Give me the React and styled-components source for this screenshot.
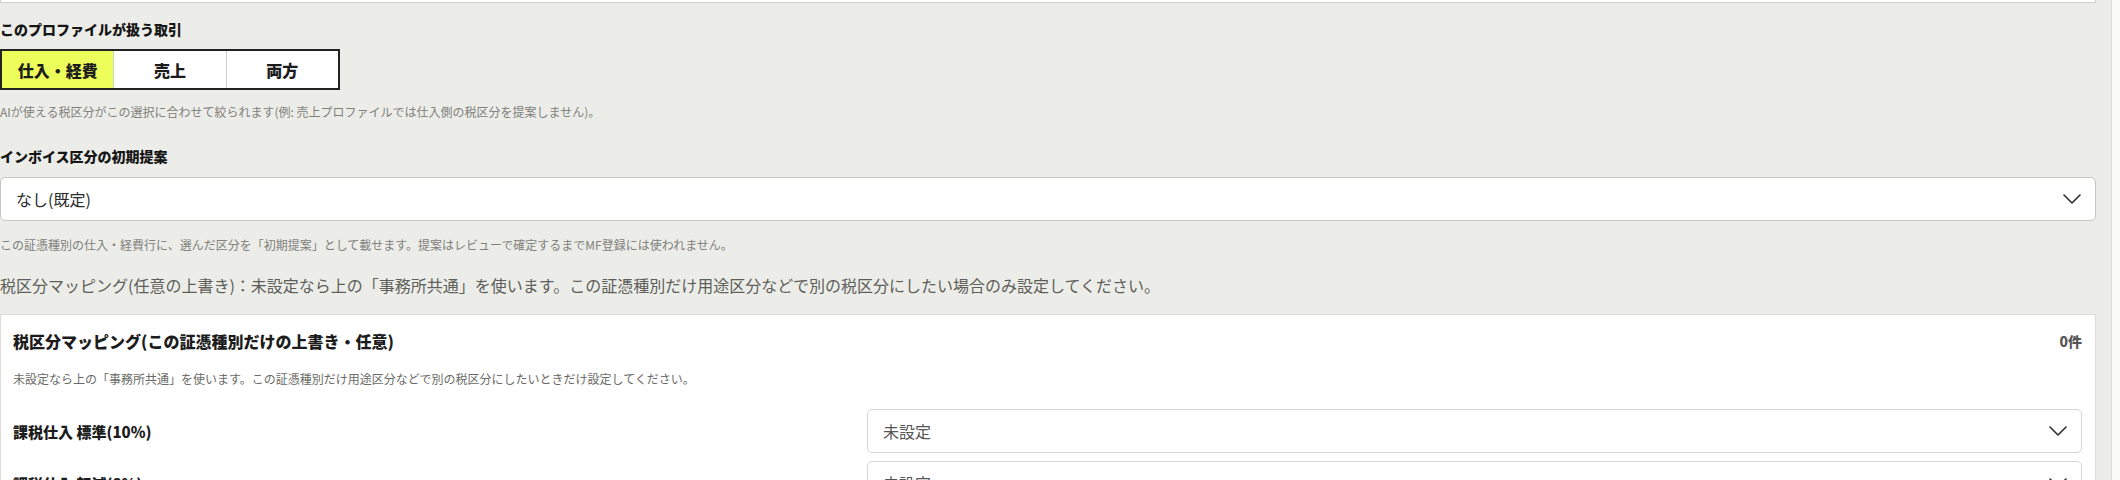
import React from "react";
import styled, { createGlobalStyle } from "styled-components";

const GlobalStyle = createGlobalStyle`
  html, body {
    margin: 0;
    padding: 0;
    background: #ecede8;
    overflow: hidden;
  }
  body {
    font-family: "Noto Sans CJK JP", "Noto Sans", sans-serif;
    color: #1c1c1c;
  }
`;

const Page = styled.div`
  display: flex;
  width: 2120px;
  height: 480px;
  overflow: hidden;
`;

const Main = styled.main`
  width: 2096px;
  flex: none;
`;

const ScrollTrack = styled.div`
  margin-left: auto;
  width: 8px;
  height: 100%;
  background: #fafaf8;
  border-left: 1px solid #dcdcd8;
`;

const TopCard = styled.div`
  height: 2px;
  background: #fff;
  border: 1px solid #d2d3cd;
  border-top: none;
`;

const FieldLabel = styled.div`
  margin-top: ${(p) => p.$mt || 0}px;
  font-size: 14px;
  line-height: 20px;
  font-weight: 900;
  color: #161616;
`;

const Segmented = styled.div`
  display: flex;
  width: 336px;
  height: 37px;
  margin-top: 10px;
  border: 2px solid #222;
  background: #fff;
`;

const Segment = styled.button`
  flex: 1;
  display: flex;
  align-items: center;
  justify-content: center;
  padding: 0;
  border: none;
  border-left: ${(p) => (p.$first ? "none" : "1px solid #d0d0cc")};
  background: ${(p) => (p.$active ? "#edfd5a" : "#fff")};
  font-family: inherit;
  font-size: 16px;
  font-weight: 900;
  color: #1c1c1c;
`;

const Help = styled.p`
  margin: ${(p) => p.$mt || 0}px 0 0;
  font-size: 12px;
  line-height: 18px;
  color: #80807c;
`;

const Note = styled.p`
  margin: 20px 0 0;
  font-size: 16px;
  line-height: 22px;
  color: #5e5e5a;
`;

const SelectBox = styled.div`
  display: flex;
  align-items: center;
  justify-content: space-between;
  height: 42px;
  margin-top: ${(p) => p.$mt || 0}px;
  padding: 0 14px 0 15px;
  background: #fff;
  border: 1px solid ${(p) => (p.$soft ? "#d6d6d2" : "#c4c5be")};
  border-radius: 5px;
  font-size: 16px;
  color: ${(p) => (p.$soft ? "#555" : "#2a2a2a")};
`;

const Panel = styled.section`
  margin-top: 18px;
  background: #fff;
  border: 1px solid #dcddd7;
  padding: 15px 13px 0 12px;
`;

const PanelHead = styled.div`
  display: flex;
  justify-content: space-between;
  align-items: center;
  line-height: 22px;
`;

const PanelTitle = styled.h3`
  margin: 0;
  font-size: 16px;
  font-weight: 900;
  color: #1c1c1c;
`;

const Count = styled.span`
  font-size: 14px;
  font-weight: 900;
  color: #555;
`;

const PanelSub = styled.p`
  margin: 18px 0 0;
  font-size: 12px;
  line-height: 18px;
  color: #6a6a66;
`;

const MapList = styled.div`
  display: grid;
  grid-template-columns: 841px 1fr;
  column-gap: 13px;
  row-gap: 8px;
  margin-top: 21px;
  align-items: center;
`;

const RowLabel = styled.div`
  font-size: 15px;
  font-weight: 900;
  color: #1c1c1c;
`;

const Chevron = () => (
  <svg width="18" height="10" viewBox="0 0 18 10" fill="none">
    <polyline
      points="1,1 9,9 17,1"
      stroke="#2c2c2c"
      strokeWidth="1.6"
      strokeLinecap="round"
      strokeLinejoin="round"
    />
  </svg>
);

const modes = ["仕入・経費", "売上", "両方"];
const rows = ["課税仕入 標準(10%)", "課税仕入 軽減(8%)"];

export default function App() {
  return (
    <>
      <GlobalStyle />
      <Page>
        <Main>
          <TopCard />
          <FieldLabel $mt={16}>このプロファイルが扱う取引</FieldLabel>
          <Segmented>
            {modes.map((m, i) => (
              <Segment key={m} $first={i === 0} $active={i === 0}>
                {m}
              </Segment>
            ))}
          </Segmented>
          <Help $mt={13}>
            AIが使える税区分がこの選択に合わせて絞られます(例: 売上プロファイルでは仕入側の税区分を提案しません)。
          </Help>

          <FieldLabel $mt={25}>インボイス区分の初期提案</FieldLabel>
          <SelectBox $mt={11}>
            なし(既定)
            <Chevron />
          </SelectBox>
          <Help $mt={15}>
            この証憑種別の仕入・経費行に、選んだ区分を「初期提案」として載せます。提案はレビューで確定するまでMF登録には使われません。
          </Help>

          <Note>
            税区分マッピング(任意の上書き)：未設定なら上の「事務所共通」を使います。この証憑種別だけ用途区分などで別の税区分にしたい場合のみ設定してください。
          </Note>

          <Panel>
            <PanelHead>
              <PanelTitle>税区分マッピング(この証憑種別だけの上書き・任意)</PanelTitle>
              <Count>0件</Count>
            </PanelHead>
            <PanelSub>
              未設定なら上の「事務所共通」を使います。この証憑種別だけ用途区分などで別の税区分にしたいときだけ設定してください。
            </PanelSub>
            <MapList>
              {rows.map((r) => (
                <React.Fragment key={r}>
                  <RowLabel>{r}</RowLabel>
                  <SelectBox $soft>
                    未設定
                    <Chevron />
                  </SelectBox>
                </React.Fragment>
              ))}
            </MapList>
          </Panel>
        </Main>
        <ScrollTrack />
      </Page>
    </>
  );
}
